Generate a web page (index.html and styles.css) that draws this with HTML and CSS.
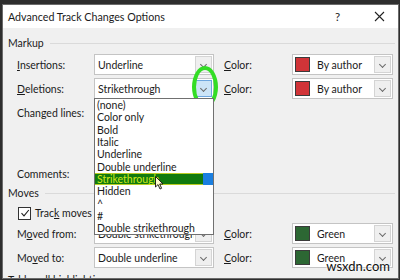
FILE: index.html
```html
<!DOCTYPE html>
<html lang="en">
<head>
    <meta charset="UTF-8">
    <title>Advanced Track Changes Options</title>
    <link rel="stylesheet" href="styles.css">
</head>
<body>
    <div class="dialog">
        <div class="titlebar">
            <span class="title">Advanced Track Changes Options</span>
            <span class="help">?</span>
            <span class="close">
                <svg width="11" height="11" viewBox="0 0 11 11"><path d="M1 1 L10 10 M10 1 L1 10" stroke="#222" stroke-width="1.1" fill="none"/></svg>
            </span>
        </div>

        <div class="content">
            <div class="section-head"><span>Markup</span><div class="rule"></div></div>

            <div class="row">
                <span class="label"><u>I</u>nsertions:</span>
                <div class="combo"><span class="value">Underline</span><span class="arrow"></span></div>
                <span></span>
                <span class="label"><u>C</u>olor:</span>
                <div class="combo"><span class="swatch red"></span><span class="value">By author</span><span class="arrow"></span></div>
            </div>

            <div class="row">
                <span class="label"><u>D</u>eletions:</span>
                <div class="combo open">
                    <span class="value">Strikethrough</span><span class="arrow active"></span>
                    <div class="ring"></div>
                    <ul class="listbox">
                        <li>(none)</li>
                        <li>Color only</li>
                        <li>Bold</li>
                        <li>Italic</li>
                        <li>Underline</li>
                        <li>Double underline</li>
                        <li class="selected"><span>Strikethrough</span><i class="marker"></i>
                            <svg class="pointer" width="9" height="14" viewBox="0 0 9 14"><path d="M0.5 0.5 L0.5 11 L3 8.6 L5 13 L6.6 12.3 L4.7 8 L8 8 Z" fill="#fffbcc" stroke="#111" stroke-width="0.9"/></svg>
                        </li>
                        <li>Hidden</li>
                        <li>^</li>
                        <li>#</li>
                        <li>Double strikethrough</li>
                    </ul>
                </div>
                <span></span>
                <span class="label"><u>C</u>olor:</span>
                <div class="combo"><span class="swatch red"></span><span class="value">By author</span><span class="arrow"></span></div>
            </div>

            <div class="row">
                <span class="label">Chan<u>g</u>ed lines:</span>
            </div>

            <div class="row comments">
                <span class="label">Comments:</span>
            </div>

            <div class="section-head"><span>Moves</span><div class="rule"></div></div>

            <div class="check-row">
                <span class="checkbox">
                    <svg width="10" height="10" viewBox="0 0 10 10"><path d="M1.5 5.2 L4 7.8 L8.8 2" stroke="#222" stroke-width="1.1" fill="none"/></svg>
                </span>
                <span>Trac<u>k</u> moves</span>
            </div>

            <div class="row">
                <span class="label">M<u>o</u>ved from:</span>
                <div class="combo"><span class="value">Double strikethrough</span><span class="arrow"></span></div>
                <span></span>
                <span class="label"><u>C</u>olor:</span>
                <div class="combo"><span class="swatch green"></span><span class="value">Green</span><span class="arrow"></span></div>
            </div>

            <div class="row">
                <span class="label">Mo<u>v</u>ed to:</span>
                <div class="combo"><span class="value">Double underline</span><span class="arrow"></span></div>
                <span></span>
                <span class="label"><u>C</u>olor:</span>
                <div class="combo"><span class="swatch green"></span><span class="value">Green</span><span class="arrow"></span></div>
            </div>

            <div class="section-head last"><span>Table cell highlighting</span><div class="rule"></div></div>
        </div>

        <div class="watermark">wsxdn.com</div>
    </div>
</body>
</html>
```

FILE: styles.css
```css
body {
    margin: 0;
    width: 400px;
    height: 280px;
    overflow: hidden;
    background-color: #2e2e2e;
    font-family: 'Lato', 'Noto Sans', sans-serif;
    font-size: 10.5px;
    color: #1b1b1b;
}

.dialog {
    position: relative;
    margin: 4px 0 0 2px;
    width: 395px;
    height: 273px;
    background-color: #f0f0f0;
    border: 1px solid #6b6b6b;
    overflow: hidden;
}

.titlebar {
    display: flex;
    align-items: center;
    height: 23px;
    padding-left: 5px;
    background-color: #fff;
}

.title {
    font-size: 10.7px;
    flex: 1;
}

.help {
    font-size: 11.5px;
    width: 39px;
}

.close {
    display: flex;
    width: 24px;
}

.content {
    padding: 8px 3px 0 5px;
}

.section-head {
    display: flex;
    align-items: center;
    height: 14px;
    gap: 6px;
}

.section-head.last {
    margin-top: 5px;
}

.rule {
    flex: 1;
    height: 1px;
    background-color: #dadada;
}

.row {
    display: grid;
    grid-template-columns: 77px 120px 10px 68px 101px;
    align-items: center;
    height: 21px;
    margin-top: 3px;
    padding-left: 9px;
}

.section-head + .row {
    margin-top: 4px;
}

.row.comments {
    margin-top: 40px;
    margin-bottom: 2px;
}

.combo {
    position: relative;
    display: flex;
    align-items: center;
    height: 19px;
    background-color: #fff;
    border: 1px solid #c4c4c4;
}

.combo .value {
    flex: 1;
    padding-left: 3px;
    white-space: nowrap;
    overflow: hidden;
}

.arrow {
    align-self: stretch;
    width: 15px;
    margin: 1px;
    background-color: #efefef;
    border: 1px solid #d4d4d4;
    position: relative;
}

.arrow::after {
    content: '';
    position: absolute;
    left: 5px;
    top: 5px;
    width: 4px;
    height: 4px;
    border-right: 1px solid #6a6a6a;
    border-bottom: 1px solid #6a6a6a;
    transform: rotate(45deg);
}

.arrow.active {
    background-color: #cce4f7;
    border-color: #6ea6de;
}

.swatch {
    width: 13px;
    height: 13px;
    margin-left: 2px;
    margin-right: 4px;
    border: 1px solid #3a3a3a;
}

.red {
    background-color: #d13438;
}

.green {
    background-color: #2c6733;
}

.ring {
    position: absolute;
    left: 97px;
    top: -13px;
    width: 18px;
    height: 34px;
    border: 4px solid #33dd25;
    border-radius: 50%;
}

.listbox {
    position: absolute;
    left: -1px;
    top: 19px;
    width: 118px;
    margin: 0;
    padding: 0;
    list-style: none;
    background-color: #fff;
    border: 1px solid #707070;
    z-index: 2;
}

.listbox li {
    position: relative;
    display: flex;
    align-items: center;
    height: 12.3px;
    padding-left: 2px;
    white-space: nowrap;
}

.listbox li.selected {
    background-color: #117a0e;
    color: #cfe81a;
    box-shadow: inset 0 1px 0 #b9cc22, inset 0 -1px 0 #b9cc22;
}

.listbox li.selected span {
    flex: 1;
}

.marker {
    width: 10px;
    align-self: stretch;
    background-color: #1b7fe0;
}

.pointer {
    position: absolute;
    left: 60px;
    top: 3px;
}

.check-row {
    display: flex;
    align-items: center;
    gap: 4px;
    height: 14px;
    margin: 6px 0 1px 10px;
}

.checkbox {
    display: flex;
    align-items: center;
    justify-content: center;
    width: 11px;
    height: 11px;
    background-color: #fff;
    border: 1px solid #333;
}

.watermark {
    position: absolute;
    right: 8px;
    bottom: 4px;
    font-size: 13px;
    color: #111;
    text-shadow: 0 0 2px #fff, 0 0 3px #fff;
}
```
